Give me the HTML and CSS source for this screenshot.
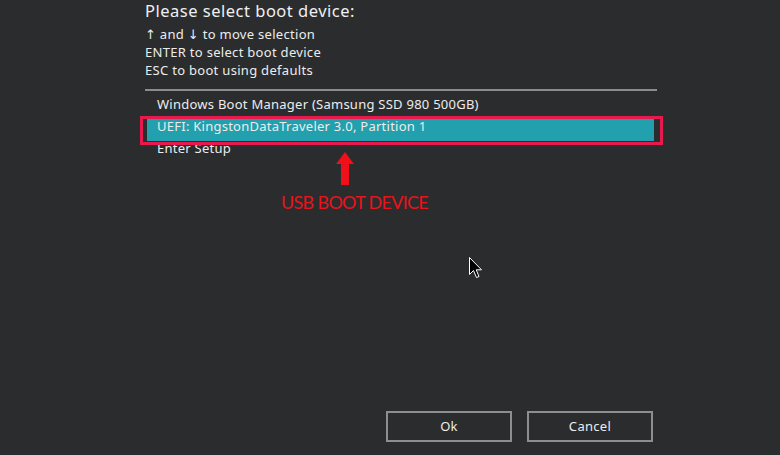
FILE: index.html
```html
<!DOCTYPE html>
<html>
<head>
<meta charset="utf-8">
<link rel="stylesheet" href="styles.css">
</head>
<body>
<div class="screen">
  <div class="title">Please select boot device:</div>
  <div class="help">
    <div>↑ and ↓ to move selection</div>
    <div>ENTER to select boot device</div>
    <div>ESC to boot using defaults</div>
  </div>
  <div class="sep"></div>
  <ul class="list">
    <li class="row">Windows Boot Manager (Samsung SSD 980 500GB)</li>
    <li class="row selected">UEFI: KingstonDataTraveler 3.0, Partition 1</li>
    <li class="row">Enter Setup</li>
  </ul>
  <div class="buttons">
    <div class="btn">Ok</div>
    <div class="btn">Cancel</div>
  </div>
</div>
<div class="mark-box"></div>
<svg class="mark-arrow" width="20" height="34" viewBox="0 0 20 34"><path d="M10 0 L19 12 L14 12 L14 33 L6 33 L6 12 L1 12 Z" fill="#f0101a"/></svg>
<div class="mark-label">USB BOOT DEVICE</div>
<svg class="cursor" width="14" height="24" viewBox="0 0 14 24"><path d="M0.5 0.5 L0.5 17.5 L4.5 13.5 L7.5 20.5 L10 19.5 L7.2 12.8 L12.5 12.8 Z" fill="#000" stroke="#fff" stroke-width="1"/></svg>
</body>
</html>
```
FILE: styles.css
```css
html, body {
  margin: 0;
  padding: 0;
}
body {
  width: 780px;
  height: 455px;
  background: #2b2c2e;
  font-family: "Noto Sans", "DejaVu Sans", sans-serif;
  color: #ececec;
  position: relative;
  overflow: hidden;
}
.screen {
  box-sizing: border-box;
  height: 455px;
  padding: 0 123px 13px 145px;
  display: flex;
  flex-direction: column;
}
.title {
  font-size: 16.5px;
  letter-spacing: 0.5px;
  line-height: 20px;
  padding-top: 1px;
  margin-bottom: 4px;
  color: #f0f0f0;
}
.help {
  font-size: 13px;
  letter-spacing: 0.3px;
  line-height: 18px;
}
.sep {
  height: 2px;
  background: #8c8c8c;
  margin-top: 10px;
}
.list {
  list-style: none;
  margin: 6px 0 0;
  padding: 0;
}
.row {
  font-size: 13px;
  letter-spacing: 0.25px;
  line-height: 15px;
  padding: 0 0 7px 10px;
  margin: 0 3px 0 2px;
}
.row.selected {
  background: #22a0ad;
}
.buttons {
  margin-top: auto;
  display: flex;
  justify-content: flex-end;
  gap: 15px;
  margin-right: 4px;
}
.btn {
  box-sizing: border-box;
  width: 126px;
  height: 31px;
  border: 2px solid #8e8e8e;
  font-size: 13px;
  letter-spacing: 0.3px;
  line-height: 27px;
  text-align: center;
}
.mark-box {
  position: absolute;
  left: 140px;
  top: 116px;
  width: 517px;
  height: 23px;
  border: 3px solid #e8194c;
}
.mark-arrow {
  position: absolute;
  left: 335px;
  top: 152px;
}
.mark-label {
  position: absolute;
  left: 281px;
  top: 190px;
  font-family: Lato, "Noto Sans", sans-serif;
  font-size: 18px;
  letter-spacing: -0.7px;
  line-height: 24px;
  color: #e8141c;
}
.cursor {
  position: absolute;
  left: 469px;
  top: 257px;
}
```
